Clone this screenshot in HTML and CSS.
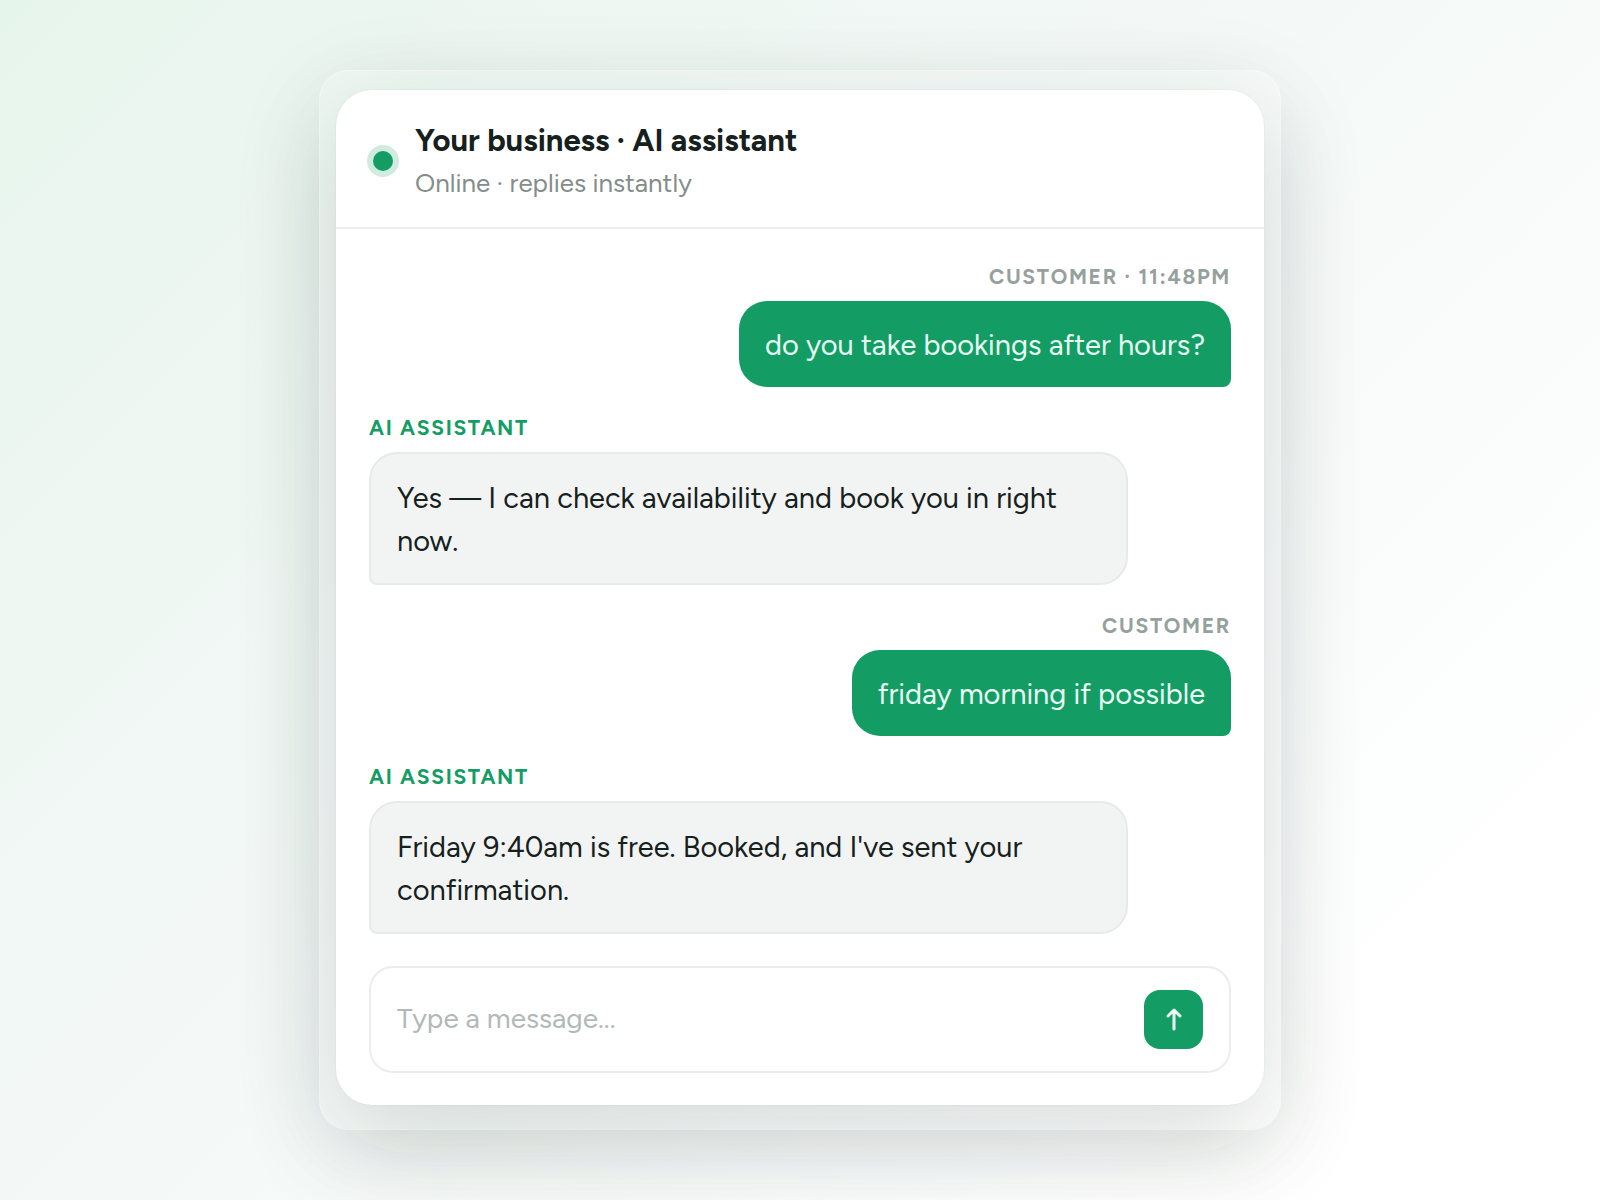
FILE: index.html
```html
<!DOCTYPE html>
<html lang="en">
<head>
<meta charset="utf-8">
<meta name="viewport" content="width=device-width, initial-scale=1">
<title>AI assistant chat</title>
<link rel="stylesheet" href="styles.css">
</head>
<body>
<main class="frame">
  <section class="card">
    <header class="header">
      <span class="status-dot"></span>
      <div class="identity">
        <h1 class="title">Your business · AI assistant</h1>
        <p class="subtitle">Online · replies instantly</p>
      </div>
    </header>
    <div class="thread">
      <article class="message message-customer">
        <p class="sender">Customer · 11:48pm</p>
        <p class="bubble">do you take bookings after hours?</p>
      </article>
      <article class="message message-assistant">
        <p class="sender">AI assistant</p>
        <p class="bubble">Yes — I can check availability and book you in right now.</p>
      </article>
      <article class="message message-customer">
        <p class="sender">Customer</p>
        <p class="bubble">friday morning if possible</p>
      </article>
      <article class="message message-assistant">
        <p class="sender">AI assistant</p>
        <p class="bubble">Friday 9:40am is free. Booked, and I've sent your confirmation.</p>
      </article>
    </div>
    <form class="composer">
      <input class="composer-input" type="text" aria-label="Message" placeholder="Type a message...">
      <button class="send" type="button" aria-label="Send message">
        <svg width="24" height="24" viewBox="0 0 24 24" fill="none" stroke="currentColor" stroke-width="3" stroke-linecap="round" stroke-linejoin="round" aria-hidden="true"><path d="M12 21V2M6 8l6-6 6 6"/></svg>
      </button>
    </form>
  </section>
</main>
</body>
</html>
```
FILE: styles.css
```css
* {
  box-sizing: border-box;
}

body {
  margin: 0;
  min-height: 100vh;
  display: flex;
  align-items: center;
  justify-content: center;
  background: linear-gradient(135deg, #e6f5eb 0%, #ecf6f1 14%, #f5f9f8 50%, #ffffff 85%);
  color: #16211d;
  font-family: Figtree, Lato, "Open Sans", sans-serif;
}

h1,
p {
  margin: 0;
}

.frame {
  width: 100%;
  max-width: 962px;
  padding: 19px 16px 24px;
  border: 1px solid rgba(255, 255, 255, 0.4);
  border-radius: 30px;
  background: rgba(255, 255, 255, 0.1);
  box-shadow: 0 24px 96px rgba(20, 40, 32, 0.09);
}

.card {
  padding-bottom: 32px;
  border-radius: 36px;
  background: #ffffff;
  box-shadow: 0 0 2px rgba(0, 0, 0, 0.08), 0 32px 96px rgba(20, 40, 32, 0.15);
}

.header {
  display: flex;
  align-items: center;
  gap: 22px;
  padding: 29px 37px 25px;
  border-bottom: 2px solid #ebecec;
}

.status-dot {
  width: 20px;
  height: 20px;
  border-radius: 50%;
  background: #139d64;
  box-shadow: 0 0 0 6px #d0ebe0;
}

.identity {
  display: flex;
  flex-direction: column;
  gap: 2px;
}

.title {
  font-size: 31px;
  line-height: 43px;
  font-weight: 700;
}

.subtitle {
  font-size: 26px;
  line-height: 38px;
  color: #838d89;
}

.thread {
  display: flex;
  flex-direction: column;
  gap: 28px;
  padding: 35px 33px 32px;
}

.message {
  display: flex;
  flex-direction: column;
  gap: 12px;
}

.message-customer {
  align-items: flex-end;
}

.message-assistant {
  align-items: flex-start;
}

.sender {
  font-size: 21px;
  line-height: 25px;
  font-weight: 700;
  letter-spacing: 0.08em;
  text-transform: uppercase;
  color: #96a09c;
}

.bubble {
  max-width: 88%;
  padding: 22px 26px 21px;
  border-radius: 28px;
  font-size: 29px;
  line-height: 43px;
}

.message-customer .bubble {
  border-bottom-right-radius: 8px;
  background: #139d64;
  color: #e9fff5;
}

.message-assistant .sender {
  color: #139d64;
}

.message-assistant .bubble {
  border: 2px solid #e8e9e9;
  border-bottom-left-radius: 8px;
  background: #f2f4f3;
}

.composer {
  display: flex;
  align-items: center;
  gap: 16px;
  margin: 0 33px;
  padding: 22px 26px;
  border: 2px solid #ebecec;
  border-radius: 24px;
}

.composer-input {
  flex: 1;
  min-width: 0;
  padding: 0 0 4px;
  border: 0;
  outline: 0;
  background: transparent;
  color: inherit;
  font: inherit;
  font-size: 28px;
  line-height: 42px;
}

.composer-input::placeholder {
  color: #b1b9b6;
  opacity: 1;
}

.send {
  display: flex;
  align-items: center;
  justify-content: center;
  width: 59px;
  height: 59px;
  padding: 0;
  border: 0;
  border-radius: 16px;
  background: #139d64;
  color: #e9fff5;
}
```
